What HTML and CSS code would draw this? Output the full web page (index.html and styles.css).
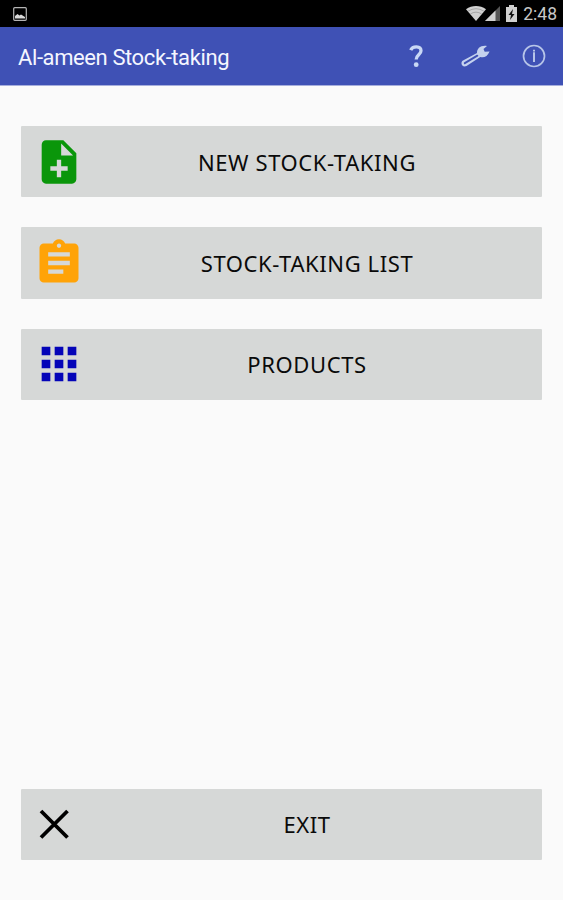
FILE: index.html
```
<!DOCTYPE html>
<html lang="en">
<head>
  <meta charset="UTF-8" />
  <meta name="viewport" content="width=device-width, initial-scale=1.0"/>
  <title>Al-ameen Stock-taking</title>
  <link rel="stylesheet" href="styles.css">
</head>
<body>
  <div class="status-bar">
    <svg class="status-picture" width="14" height="14" viewBox="0 0 14 14">
      <rect x="0.7" y="0.7" width="12.6" height="12.6" rx="1" fill="none" stroke="#b4b4b4" stroke-width="1.2"/>
      <path d="M2 11.500V9l2.500-2 2 1.500 1.500-1L12 10v1.500z" fill="#d8d8d8"/>
    </svg>
    <svg width="20" height="15" viewBox="0 0 20 15">
      <path d="M0 3.200C6-1 14-1 20 3.200L10 15z" fill="#d0d0d0"/>
      <path d="M2 5.200q8-5 16 0M4.300 8q5.700-3.700 11.400 0" fill="none" stroke="#888" stroke-width="0.6"/>
    </svg>
    <svg class="status-signal" width="15" height="15" viewBox="0 0 15 15">
      <path d="M0 15L15 0v15z" fill="#555"/>
      <path d="M0 15L10.500 4.500V15z" fill="#d0d0d0"/>
    </svg>
    <svg class="status-battery" width="11" height="17" viewBox="0 0 11 17">
      <path d="M3 0h5v2h3v15H0V2h3z" fill="#d0d0d0"/>
      <path d="M7 4L2.500 10h2.500L4 15l4.500-6H6z" fill="#111"/>
    </svg>
    <span class="status-time">2:48</span>
  </div>

  <header class="app-bar">
    <h1 class="app-title">Al-ameen Stock-taking</h1>
    <nav class="actions">
      <svg width="16" height="24" viewBox="0 0 16 24">
        <path d="M2.700 6.200C4.500 1.700 13 1.500 13 6.800c0 4-4.800 4-4.800 8.600" fill="none" stroke="#c9d8f5" stroke-width="3.300"/>
        <circle cx="8.200" cy="20.700" r="2.400" fill="#c9d8f5"/>
      </svg>
      <svg class="action-wrench" width="30" height="24" viewBox="0 0 30 24">
        <path d="M17 9C17 4.500 20.500 1 27 2L23.500 5l1.200 2.700 4.900-.2C27.500 12.500 24 14 20.300 13L6.500 22C2.500 24 -.5 19 3 16.600z" fill="#c5d2ee"/>
        <path d="M4.800 19.200l12.500-7.500" stroke="#3f51b5" stroke-width="2" stroke-linecap="round"/>
      </svg>
      <svg class="action-info" width="24" height="24" viewBox="0 0 24 24">
        <circle cx="12" cy="12" r="10.500" fill="none" stroke="#b7c5e8" stroke-width="1.700"/>
        <path d="M12 8.200V18M12 5.800v1.800" stroke="#b7c5e8" stroke-width="2"/>
      </svg>
    </nav>
  </header>

  <main class="menu">
    <button class="menu-btn">
      <svg class="menu-icon" viewBox="0 0 24 24" fill="#0a960a">
        <path d="M14 2H6c-1.100 0-1.990.9-1.990 2L4 20c0 1.100.890 2 1.990 2H18c1.100 0 2-.9 2-2V8l-6-6zm2 14h-3v3h-2v-3H8v-2h3v-3h2v3h3v2zm-3-7V3.500L18.500 9H13z"/>
      </svg>
      <span>NEW STOCK-TAKING</span>
    </button>
    <button class="menu-btn">
      <svg class="menu-icon" viewBox="0 0 24 24" fill="#ffa308">
        <path d="M19 3h-4.180C14.400 1.840 13.300 1 12 1c-1.300 0-2.400.84-2.820 2H5c-1.100 0-2 .9-2 2v14c0 1.100.9 2 2 2h14c1.100 0 2-.9 2-2V5c0-1.100-.9-2-2-2zm-7 0c.55 0 1 .45 1 1s-.45 1-1 1-1-.45-1-1 .45-1 1-1zm2 14H7v-2h7v2zm3-4H7v-2h10v2zm0-4H7V7h10v2z"/>
      </svg>
      <span>STOCK-TAKING LIST</span>
    </button>
    <button class="menu-btn">
      <svg class="menu-icon" viewBox="0 0 24 24" fill="#0404b8">
        <path d="M4 8h4V4H4v4zm6 12h4v-4h-4v4zm-6 0h4v-4H4v4zm0-6h4v-4H4v4zm6 0h4v-4h-4v4zm6-10v4h4V4h-4zm-6 4h4V4h-4v4zm6 6h4v-4h-4v4zm0 6h4v-4h-4v4z"/>
      </svg>
      <span>PRODUCTS</span>
    </button>
    <button class="menu-btn menu-exit">
      <svg class="menu-icon" viewBox="0 0 52 52">
        <path d="M8 13l26.500 26.500M34.500 13L8 39.500" stroke="#000" stroke-width="3.800"/>
      </svg>
      <span>EXIT</span>
    </button>
  </main>
</body>
</html>
```

FILE: styles.css
```
* {
  box-sizing: border-box;
}

body {
  margin: 0;
  height: 900px;
  display: flex;
  flex-direction: column;
  background-color: #fafafa;
  font-family: "Noto Sans", sans-serif;
  overflow: hidden;
}

.status-bar {
  display: flex;
  align-items: center;
  height: 27px;
  padding: 0 6px 0 13px;
  background-color: #000;
}

.status-picture {
  margin-right: auto;
}

.status-signal {
  margin-left: -1px;
}

.status-battery {
  margin-left: 6px;
}

.status-time {
  margin-left: 6px;
  font-family: Roboto, sans-serif;
  font-size: 17.5px;
  line-height: 28px;
  color: #c8c8c8;
}

.app-bar {
  display: flex;
  align-items: center;
  justify-content: space-between;
  height: 59px;
  padding: 0 17px 0 18px;
  background-color: #3f51b5;
  border-bottom: 1px solid #a6aedc;
}

.app-title {
  margin: 2px 0 0;
  font-family: Roboto, sans-serif;
  font-size: 22px;
  font-weight: normal;
  letter-spacing: -0.4px;
  color: #f4f6ff;
}

.actions {
  display: flex;
  align-items: center;
}

.action-wrench {
  margin-left: 36px;
}

.action-info {
  margin-left: 32px;
}

.menu {
  flex: 1;
  display: flex;
  flex-direction: column;
  gap: 30px;
  padding: 40px 21px 40px;
}

.menu-btn {
  display: flex;
  align-items: center;
  height: 71.4px;
  padding: 0 13px 0 12px;
  border: none;
  border-radius: 1px;
  background-color: #d6d8d7;
  color: #0a0a0a;
  font-family: "Noto Sans", sans-serif;
  font-size: 22px;
  letter-spacing: 0.6px;
  cursor: pointer;
}

.menu-icon {
  width: 52px;
  height: 52px;
}

.menu-btn span {
  flex: 1;
  text-align: center;
}

.menu-exit {
  margin-top: auto;
}
```
